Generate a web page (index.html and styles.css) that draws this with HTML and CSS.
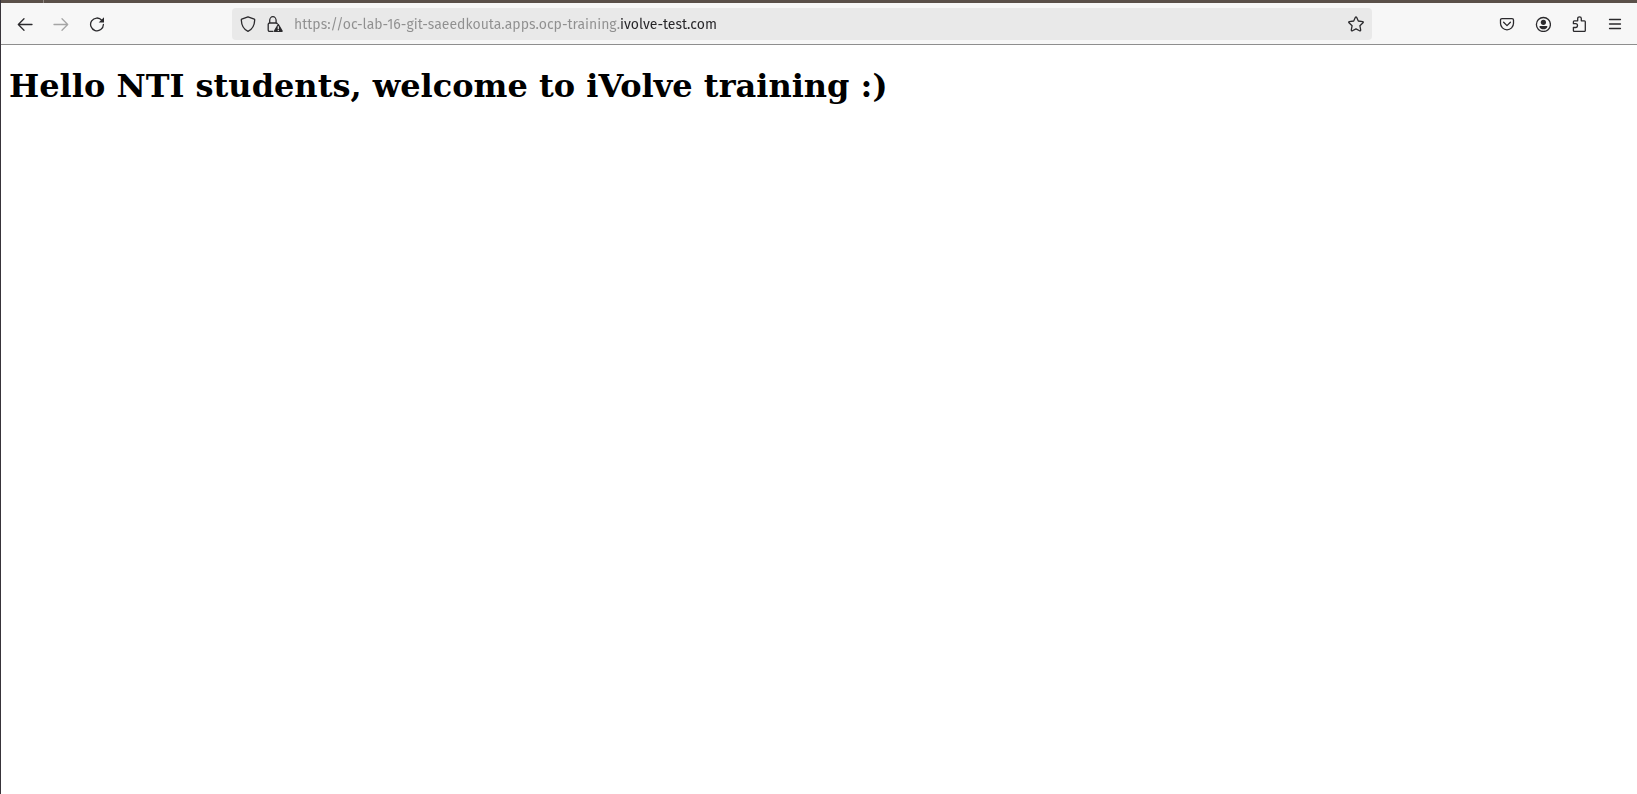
FILE: index.html
```html
<!DOCTYPE html>
<html lang="en">
<head>
<meta charset="utf-8">
<meta name="viewport" content="width=device-width, initial-scale=1">
<title>iVolve training</title>
<link rel="stylesheet" href="styles.css">
</head>
<body>
<div class="window">
  <div class="tab-edge"><span class="tab-divider"></span></div>
  <header class="toolbar">
    <nav class="buttons" aria-label="Navigation">
      <button class="tool" type="button" aria-label="Back">
        <svg class="icon" viewBox="0 0 16 16"><path d="M15 8.500H1.500M7 2.800L1.300 8.500L7 14.200"/></svg>
      </button>
      <button class="tool" type="button" aria-label="Forward" disabled>
        <svg class="icon" viewBox="0 0 16 16"><path d="M1 8.500h13.500M9 2.800l5.700 5.700L9 14.200"/></svg>
      </button>
      <button class="tool" type="button" aria-label="Reload">
        <svg class="icon" viewBox="0 0 16 16"><path d="M12.900 4.300A6.400 6.400 0 1 0 14.400 8.500"/><path class="solid" d="M15 1.200v5.300H9.700z"/></svg>
      </button>
    </nav>
    <form class="address">
      <button class="field-button" type="button" aria-label="Tracking protection">
        <svg class="icon" viewBox="0 0 16 16"><path d="M8 .8L14.300 3.100Q14.800 3.300 14.700 4C14.500 9 12.500 13.300 8 15.300C3.500 13.300 1.500 9 1.300 4Q1.200 3.300 1.700 3.100z"/></svg>
      </button>
      <button class="field-button" type="button" aria-label="Connection is not secure">
        <svg class="icon" viewBox="0 0 16 16"><path d="M6 15.300H2.700Q1.200 15.300 1.200 13.800V8.500Q1.200 7 2.700 7H8.800Q10 7 10.300 7.800M2.700 7V4.500A3.200 3.800 0 0 1 9.100 4.500V7"/><path class="solid" fill-rule="evenodd" d="M10.700 8.300Q11.300 7.300 11.900 8.300L15.700 14.700Q16 16 14.900 16H7.700Q6.600 16 6.900 14.700zM10.700 10.300V13h1.200V10.300zM10.700 13.800V15h1.200V13.800z"/></svg>
      </button>
      <input class="url" type="text" aria-label="Address" spellcheck="false" value="https://oc-lab-16-git-saeedkouta.apps.ocp-training.ivolve-test.com">
      <button class="field-button" type="button" aria-label="Bookmark this page">
        <svg class="icon" viewBox="0 0 16 16"><path d="M7.400 1.300Q8 .3 8.600 1.300L10.300 5L14.600 5.600Q15.700 5.900 15 6.800L11.900 9.700L12.700 14Q12.700 15.200 11.600 14.800L8 12.900L4.400 14.800Q3.300 15.200 3.300 14L4.100 9.700L1 6.800Q.3 5.900 1.400 5.600L5.700 5z"/></svg>
      </button>
    </form>
    <div class="buttons">
      <button class="tool" type="button" aria-label="Save to Pocket">
        <svg class="icon" viewBox="0 0 16 16"><path d="M3 2.600H13Q14.500 2.600 14.500 4.100V7.300A6.500 6.500 0 0 1 1.500 7.300V4.100Q1.500 2.600 3 2.600zM4.600 6.300L8 9.600L11.400 6.300"/></svg>
      </button>
      <button class="tool" type="button" aria-label="Account">
        <svg class="icon" viewBox="0 0 16 16"><circle cx="8.400" cy="8.500" r="7"/><circle class="solid" cx="8.400" cy="6.300" r="2.600"/><path class="solid" d="M5.100 10H11.700Q12.600 10 12.400 10.900C11.700 12.500 10.200 13.300 8.400 13.300S5.100 12.500 4.400 10.900Q4.200 10 5.100 10z"/></svg>
      </button>
      <button class="tool" type="button" aria-label="Extensions">
        <svg class="icon" viewBox="0 0 16 16"><path d="M3.300 15.400Q2.400 15.400 2.400 14.500V11.500H4.600A1.900 1.900 0 0 0 4.600 7.700H2.400V5.700Q2.400 4.800 3.300 4.800H6.700V2.600A1.800 1.800 0 0 1 10.300 2.600V4.800H13.400Q14.300 4.800 14.300 5.700V14.500Q14.300 15.400 13.400 15.400z"/></svg>
      </button>
      <button class="tool" type="button" aria-label="Open application menu">
        <svg class="icon" viewBox="0 0 16 16"><path d="M2.500 3.500H13.500M2.500 8H13.500M2.500 12.500H13.500"/></svg>
      </button>
    </div>
  </header>
  <main class="page">
    <h1 class="greeting">Hello NTI students, welcome to iVolve training :)</h1>
  </main>
</div>
</body>
</html>
```
FILE: styles.css
```css
* {
  box-sizing: border-box;
}

body {
  margin: 0;
  background: #fff;
}

.window {
  min-height: 100vh;
  border-left: 1px solid #38343a;
}

.tab-edge {
  display: flex;
  height: 3px;
  padding-left: 42px;
  background: #5a5049;
}

.tab-divider {
  width: 1px;
  background: #8d8681;
}

.toolbar {
  display: grid;
  grid-template-columns: auto 39fr 380fr 39fr auto;
  align-items: center;
  padding: 5px 4px 4px 6px;
  background: #f7f7f7;
  border-bottom: 1px solid #8e8e8e;
}

.buttons {
  display: flex;
}

.buttons:last-child {
  grid-column: 5;
}

.tool,
.field-button {
  display: flex;
  align-items: center;
  justify-content: center;
  height: 32px;
  padding: 0;
  border: 0;
  background: none;
  color: #2b2a2d;
}

.tool {
  width: 36px;
}

.tool:disabled {
  color: #a5a5a5;
}

.field-button {
  flex: none;
  width: 26px;
}

.icon {
  width: 16px;
  height: 16px;
  fill: none;
  stroke: currentColor;
  stroke-width: 1.3;
  stroke-linecap: round;
  stroke-linejoin: round;
}

.icon .solid {
  fill: currentColor;
  stroke: none;
}

.address {
  grid-column: 3;
  display: flex;
  gap: 1px;
  padding: 0 3px;
  border-radius: 4px;
  background: #e9e9e9;
}

.url {
  flex: 1;
  min-width: 0;
  height: 32px;
  margin: 0 0 0 5px;
  padding: 0;
  border: 0;
  outline: 0;
  background: linear-gradient(to right, #8f8f8f 326px, #252427 326px);
  background-clip: text;
  -webkit-background-clip: text;
  color: transparent;
  caret-color: #252427;
  font: 14px "Fira Sans", "Noto Sans", sans-serif;
}

.page {
  padding: 0 8px;
}

.greeting {
  margin: 0;
  padding: 22px 0;
  font: bold 32px "DejaVu Serif", serif;
}
```
